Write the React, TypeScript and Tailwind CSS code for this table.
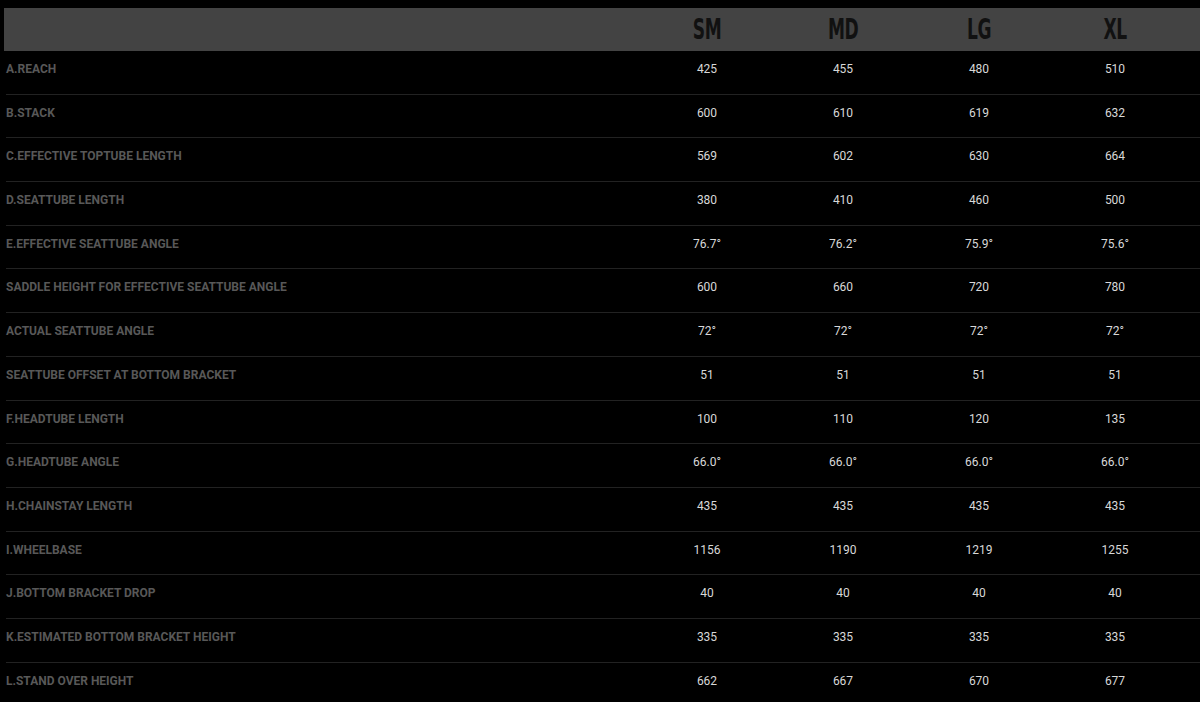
const sizes = ["SM", "MD", "LG", "XL"];

const rows: [string, string[]][] = [
  ["A.REACH", ["425", "455", "480", "510"]],
  ["B.STACK", ["600", "610", "619", "632"]],
  ["C.EFFECTIVE TOPTUBE LENGTH", ["569", "602", "630", "664"]],
  ["D.SEATTUBE LENGTH", ["380", "410", "460", "500"]],
  ["E.EFFECTIVE SEATTUBE ANGLE", ["76.7°", "76.2°", "75.9°", "75.6°"]],
  ["SADDLE HEIGHT FOR EFFECTIVE SEATTUBE ANGLE", ["600", "660", "720", "780"]],
  ["ACTUAL SEATTUBE ANGLE", ["72°", "72°", "72°", "72°"]],
  ["SEATTUBE OFFSET AT BOTTOM BRACKET", ["51", "51", "51", "51"]],
  ["F.HEADTUBE LENGTH", ["100", "110", "120", "135"]],
  ["G.HEADTUBE ANGLE", ["66.0°", "66.0°", "66.0°", "66.0°"]],
  ["H.CHAINSTAY LENGTH", ["435", "435", "435", "435"]],
  ["I.WHEELBASE", ["1156", "1190", "1219", "1255"]],
  ["J.BOTTOM BRACKET DROP", ["40", "40", "40", "40"]],
  ["K.ESTIMATED BOTTOM BRACKET HEIGHT", ["335", "335", "335", "335"]],
  ["L.STAND OVER HEIGHT", ["662", "667", "670", "677"]],
];

export default function App() {
  return (
    <div className="h-[702px] w-[1200px] overflow-hidden bg-black pt-2 pl-1 font-['Roboto',sans-serif]">
      {/* header bar */}
      <div className="flex h-[43px] items-center bg-[#434343] pr-[17px]">
        <div className="flex-1" />
        {sizes.map((s) => (
          <div key={s} className="flex w-[136px] justify-center">
            <span className="inline-block scale-y-[1.45] font-['DejaVu_Sans_Condensed',sans-serif] text-[19px] font-bold leading-none tracking-[-0.5px] text-[#111]">
              {s}
            </span>
          </div>
        ))}
      </div>

      {rows.map(([label, vals]) => (
        <div
          key={label}
          className="ml-[2px] flex h-[43.7px] items-start border-b border-[#222] pt-[11px] pr-[17px]"
        >
          <div className="flex-1 text-[12px] leading-[14px] font-bold text-[#585858]">
            {label}
          </div>
          {vals.map((v, i) => (
            <div
              key={i}
              className="w-[136px] text-center text-[12px] leading-[14px] text-[#d8d8d8]"
            >
              {v}
            </div>
          ))}
        </div>
      ))}
    </div>
  );
}
